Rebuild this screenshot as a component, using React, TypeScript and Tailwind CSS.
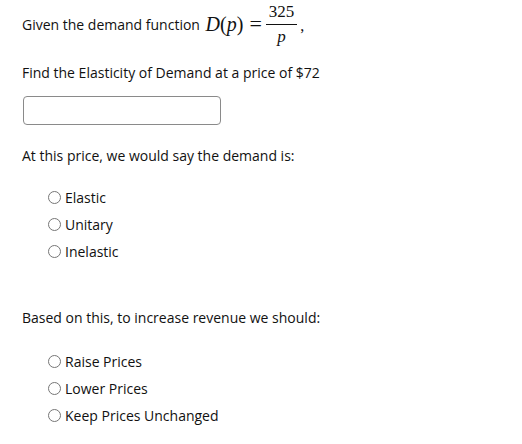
import React from "react";

function Radio({ label }: { label: string }) {
  return (
    <label className="flex items-center h-[27px]">
      <span className="w-[13px] h-[13px] rounded-full border border-[#767676] bg-white mr-[4px] shrink-0" />
      <span>{label}</span>
    </label>
  );
}

export default function App() {
  return (
    <div
      className="w-[522px] h-[444px] bg-white text-[#111111] text-[14px] leading-[21px] relative"
      style={{ fontFamily: '"Trebuchet MS", "Open Sans", sans-serif' }}
    >
      <div className="pl-[22px] pt-[2px]">
        <div className="flex items-center h-[44px]">
          <span>Given the demand function&nbsp;</span>
          <span className="flex items-center text-[20px] leading-[24px] ml-[2px]" style={{ fontFamily: '"Liberation Serif", serif' }}>
            <span className="italic">D</span>
            <span>(</span>
            <span className="italic">p</span>
            <span>)</span>
            <span className="ml-[6px] mr-[4px] text-[22px]">=</span>
            <span className="flex flex-col items-center text-[17px] leading-[18px]">
              <span className="px-[3px]">325</span>
              <span className="h-[1px] w-full bg-[#111111] my-[3px]" />
              <span className="italic">p</span>
            </span>
            <span className="text-[16px] ml-[3px] mt-[4px]">,</span>
          </span>
        </div>
        <div className="mt-[16px]">Find the Elasticity of Demand at a price of $72</div>
        <div className="mt-[13px] ml-[1px] w-[198px] h-[29px] border border-[#8a8a8a] rounded-[4px]" />
        <div className="mt-[20px]">At this price, we would say the demand is:</div>
        <div className="mt-[18px] ml-[26px] flex flex-col">
          <Radio label="Elastic" />
          <Radio label="Unitary" />
          <Radio label="Inelastic" />
        </div>
        <div className="mt-[42px]">Based on this, to increase revenue we should:</div>
        <div className="mt-[20px] ml-[26px] flex flex-col">
          <Radio label="Raise Prices" />
          <Radio label="Lower Prices" />
          <Radio label="Keep Prices Unchanged" />
        </div>
      </div>
    </div>
  );
}
